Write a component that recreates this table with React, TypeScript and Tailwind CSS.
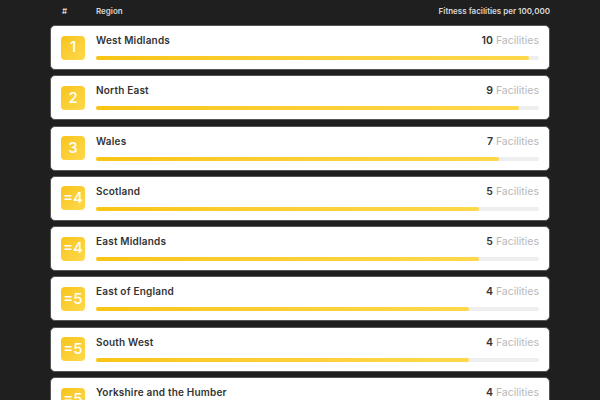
import React from 'react';

interface Row {
  rank: string;
  region: string;
  count: number;
}

const rows: Row[] = [
  { rank: '1', region: 'West Midlands', count: 10 },
  { rank: '2', region: 'North East', count: 9 },
  { rank: '3', region: 'Wales', count: 7 },
  { rank: '=4', region: 'Scotland', count: 5 },
  { rank: '=4', region: 'East Midlands', count: 5 },
  { rank: '=5', region: 'East of England', count: 4 },
  { rank: '=5', region: 'South West', count: 4 },
  { rank: '=5', region: 'Yorkshire and the Humber', count: 4 },
];

const App: React.FC = () => {
  return (
    <div
      className="w-[600px] h-[400px] overflow-hidden bg-[#1f1f1f]"
      style={{ fontFamily: 'Inter, "Open Sans", sans-serif' }}
    >
      <div className="mx-[50px] w-[500px]">
        {/* Header */}
        <div className="flex items-center h-[22px] text-[8px] font-semibold text-[#d8d8d8]">
          <span className="w-[46px] pl-[12px]">#</span>
          <span>Region</span>
          <span className="ml-auto">Fitness facilities per 100,000</span>
        </div>

        {/* Cards */}
        <div className="flex flex-col gap-[5.3px] mt-[3px]">
          {rows.map((row, i) => (
            <div
              key={i}
              className="flex items-center h-[45px] shrink-0 bg-white rounded-[5px] border border-[#555] pl-[10px] pr-[10px]"
            >
              <div className="w-[24px] h-[24px] rounded-[4px] bg-gradient-to-br from-[#f7c415] to-[#ffd94a] flex items-center justify-center text-white text-[15px] font-medium">
                {row.rank}
              </div>
              <div className="flex-1 self-start mt-[7px] ml-[11px] flex flex-col">
                <div className="flex items-baseline h-[16px]">
                  <span className="text-[10px] font-semibold text-[#333] tracking-[0.2px]">{row.region}</span>
                  <span className="ml-auto text-[10.5px]">
                    <span className="font-semibold text-[#333]">{row.count}</span>{' '}
                    <span className="text-[#b8b8b8]">Facilities</span>
                  </span>
                </div>
                <div className="mt-[7px] h-[4px] rounded-full bg-[#eeeeee]">
                  <div
                    className="h-full rounded-full bg-gradient-to-r from-[#f8c513] to-[#ffd84a]"
                    style={{ width: `${333 + row.count * 10}px` }}
                  />
                </div>
              </div>
            </div>
          ))}
        </div>
      </div>
    </div>
  );
};

export default App;
